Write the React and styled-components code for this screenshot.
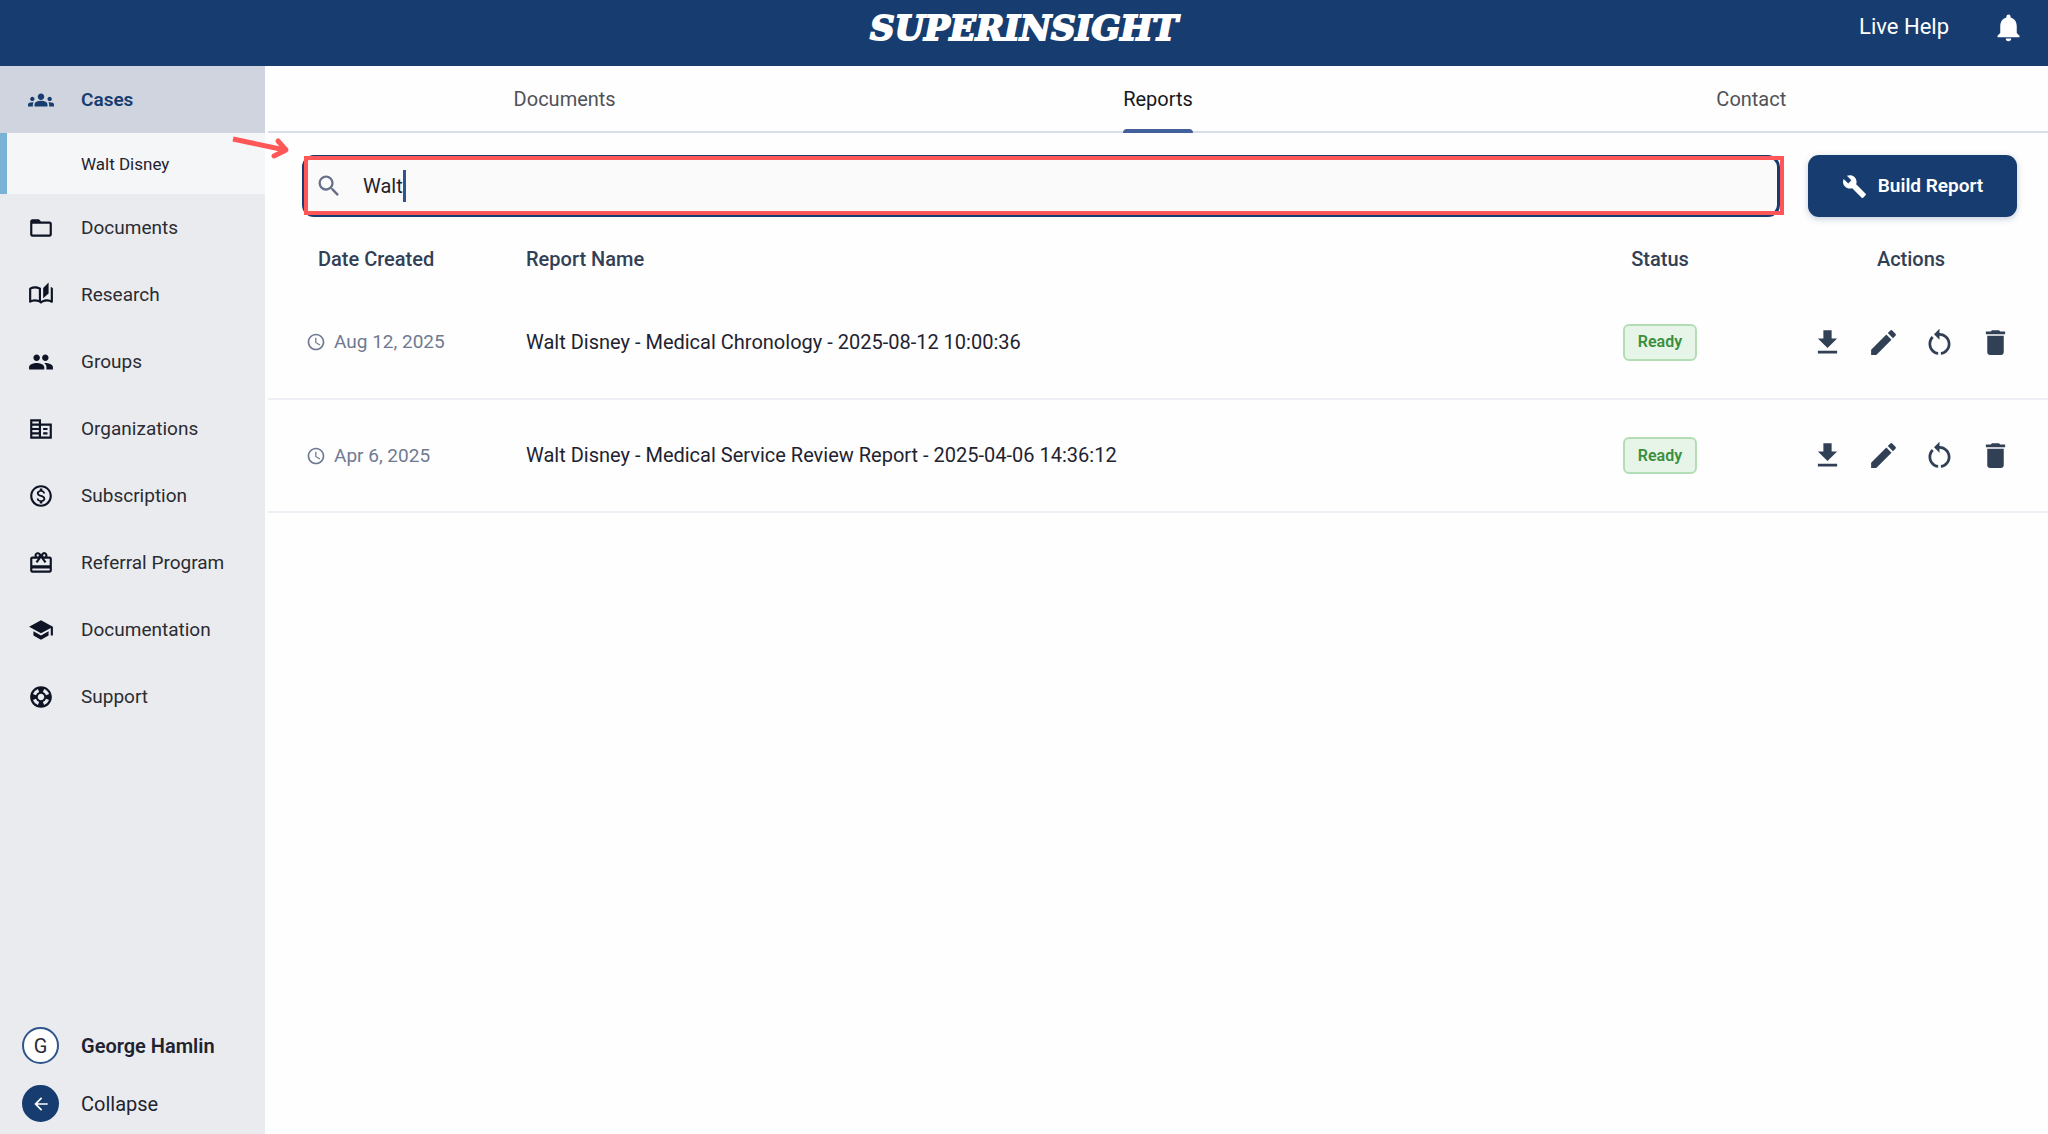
import React, { useState } from "react";
import styled, { createGlobalStyle } from "styled-components";
import {
  MdGroups,
  MdFolderOpen,
  MdOutlineAutoStories,
  MdPeople,
  MdCorporateFare,
  MdOutlineMonetizationOn,
  MdCardGiftcard,
  MdSchool,
  MdSupport,
  MdNotifications,
  MdBuild,
  MdSearch,
  MdAccessTime,
  MdEdit,
  MdRestartAlt,
  MdDelete,
  MdArrowBack,
} from "react-icons/md";

const GlobalStyle = createGlobalStyle`
  *, *::before, *::after { box-sizing: border-box; }
  body {
    margin: 0;
    background: #fefefe;
    color: #1f2330;
    font-family: Roboto, "Liberation Sans", sans-serif;
    font-size: 19px;
    line-height: 24px;
  }
  button, input { font: inherit; color: inherit; }
  a { color: inherit; text-decoration: none; }
`;

const Page = styled.div`
  display: flex;
  flex-direction: column;
  min-height: 100vh;
`;

const Header = styled.header`
  display: grid;
  grid-template-columns: 1fr auto 1fr;
  align-items: start;
  height: 66px;
  padding: 8px 23px 0;
  background: #173d70;
  color: #fff;
`;

const Logo = styled.a`
  grid-column: 2;
  font-family: "DejaVu Serif", serif;
  font-size: 34px;
  line-height: 40px;
  font-weight: 700;
  font-style: italic;
  -webkit-text-stroke: 2px #fff;
`;

const HeaderActions = styled.div`
  display: flex;
  justify-content: flex-end;
  align-items: center;
  gap: 43px;
  height: 38px;
`;

const HelpLink = styled.a`
  font-size: 22px;
`;

const IconButton = styled.button`
  display: flex;
  align-items: center;
  justify-content: center;
  width: ${(p) => p.$width}px;
  height: ${(p) => p.$height}px;
  padding: 0;
  border: 0;
  background: none;
  cursor: pointer;
`;

const Body = styled.div`
  display: flex;
  flex: 1;
`;

const Sidebar = styled.aside`
  display: flex;
  flex-direction: column;
  justify-content: space-between;
  flex: 0 0 265px;
  background: #eaebef;
`;

const NavItem = styled.a`
  display: flex;
  align-items: center;
  gap: 27px;
  height: 67px;
  padding-left: 28px;
  background: ${(p) => (p.$active ? "#d0d4de" : "transparent")};
  color: ${(p) => (p.$active ? "#173d70" : "#2a2c31")};
  font-weight: ${(p) => (p.$active ? 600 : 400)};

  svg {
    flex: none;
    color: ${(p) => (p.$active ? "#173d70" : "#0e1424")};
  }
`;

const SubItem = styled.a`
  display: flex;
  align-items: center;
  height: 61px;
  padding-left: 74px;
  border-left: 7px solid #7ab2d6;
  background: #f5f6f8;
  font-size: 17px;
`;

const Account = styled.div`
  display: flex;
  flex-direction: column;
  gap: 21px;
  padding: 0 22px 12px;
`;

const AccountButton = styled.button`
  display: flex;
  align-items: center;
  gap: 22px;
  padding: 0;
  border: 0;
  background: none;
  font-size: 20px;
  font-weight: ${(p) => (p.$strong ? 600 : 400)};
  cursor: pointer;
`;

const Disc = styled.span`
  display: flex;
  align-items: center;
  justify-content: center;
  width: 37px;
  height: 37px;
  border: 2px solid ${(p) => (p.$filled ? "#173d70" : "#2f558c")};
  border-radius: 50%;
  background: ${(p) => (p.$filled ? "#173d70" : "#fff")};
  color: ${(p) => (p.$filled ? "#fff" : "#2a2c31")};
  font-weight: 400;
`;

const Main = styled.main`
  flex: 1;
  min-width: 0;
  padding-left: 3px;
`;

const Tabs = styled.nav`
  display: grid;
  grid-template-columns: repeat(3, 1fr);
  justify-items: center;
  height: 67px;
  border-bottom: 2px solid #d9dee8;
`;

const Tab = styled.a`
  position: relative;
  display: flex;
  align-items: center;
  height: 65px;
  font-size: 20px;
  color: ${(p) => (p.$active ? "#16181d" : "#505258")};

  &::after {
    content: "";
    position: absolute;
    inset: auto 0 -2px;
    height: 4px;
    border-radius: 4px 4px 0 0;
    background: ${(p) => (p.$active ? "#42609a" : "transparent")};
  }
`;

const Toolbar = styled.div`
  display: flex;
  gap: 28px;
  padding: 22px 31px 0 34px;
`;

const SearchBox = styled.label`
  position: relative;
  display: flex;
  align-items: center;
  flex: 1;
  height: 62px;
  padding-left: 10px;
  border: 3px solid #173d70;
  border-radius: 12px;
  background: #fafafa;
  cursor: text;

  svg { color: #667089; margin-right: 20px; }
`;

const SearchInput = styled.input`
  field-sizing: content;
  min-width: 1px;
  padding: 0;
  border: 0;
  outline: 0;
  background: transparent;
  font-size: 20px;
  caret-color: transparent;
`;

const Caret = styled.span`
  width: 3px;
  height: 32px;
  background: #2f558c;
`;

const Highlight = styled.span`
  position: absolute;
  inset: -2px -7px -1px -1px;
  border: 4px solid #ff5757;
  pointer-events: none;
`;

const Pointer = styled.svg`
  && {
    position: absolute;
    left: -73px;
    top: -26px;
    margin: 0;
    color: #ff5757;
    pointer-events: none;
  }
`;

const BuildButton = styled.button`
  display: flex;
  align-items: center;
  justify-content: center;
  gap: 11px;
  width: 209px;
  height: 62px;
  padding: 0;
  border: 0;
  border-radius: 11px;
  background: #173d70;
  box-shadow: 0 2px 6px rgba(23, 61, 112, 0.25);
  color: #fff;
  font-weight: 600;
  cursor: pointer;
`;

const Table = styled.table`
  width: 100%;
  table-layout: fixed;
  border-collapse: collapse;
`;

const HeadCell = styled.th`
  width: ${(p) => p.$width || "auto"};
  height: 69px;
  padding: 14px 0 0 ${(p) => p.$indent || 0}px;
  color: #324056;
  font-size: 20px;
  font-weight: 500;
  text-align: ${(p) => (p.$center ? "center" : "left")};
`;

const Row = styled.tr`
  height: 113px;
  border-bottom: 2px solid #eeeff5;
`;

const Cell = styled.td`
  padding: 0;
  text-align: ${(p) => (p.$center ? "center" : "left")};
`;

const DateLabel = styled.span`
  display: flex;
  align-items: center;
  gap: 8px;
  padding-left: 38px;
  color: #6f7a92;
`;

const ReportName = styled.span`
  font-size: 20px;
`;

const Badge = styled.span`
  display: inline-flex;
  align-items: center;
  height: 37px;
  padding: 0 13px;
  border: 2px solid #b3deb5;
  border-radius: 6px;
  background: #e7f4e8;
  color: #3a8f3e;
  font-size: 16px;
  font-weight: 600;
`;

const Actions = styled.div`
  display: flex;
  justify-content: center;
  color: #324056;
`;

const navItems = [
  ["Documents", MdFolderOpen],
  ["Research", MdOutlineAutoStories],
  ["Groups", MdPeople],
  ["Organizations", MdCorporateFare],
  ["Subscription", MdOutlineMonetizationOn],
  ["Referral Program", MdCardGiftcard],
  ["Documentation", MdSchool],
  ["Support", MdSupport],
];

const reports = [
  { date: "Aug 12, 2025", name: "Walt Disney - Medical Chronology - 2025-08-12 10:00:36" },
  { date: "Apr 6, 2025", name: "Walt Disney - Medical Service Review Report - 2025-04-06 14:36:12" },
];

const DownloadIcon = () => (
  <svg width="33" height="33" viewBox="0 0 24 24" fill="currentColor" aria-hidden="true">
    <path d="M19 9h-4V3H9v6H5l7 7 7-7zM5 18v2h14v-2H5z" />
  </svg>
);

const rowActions = [
  ["Download", <DownloadIcon key="d" />],
  ["Edit", <MdEdit key="e" size={33} />],
  ["Regenerate", <MdRestartAlt key="r" size={33} />],
  ["Delete", <MdDelete key="x" size={33} />],
];

export default function App() {
  const [query, setQuery] = useState("Walt");
  return (
    <Page>
      <GlobalStyle />
      <Header>
        <Logo href="#">SUPERINSIGHT</Logo>
        <HeaderActions>
          <HelpLink href="#help">Live Help</HelpLink>
          <IconButton $width={33} $height={38} aria-label="Notifications">
            <MdNotifications size={33} />
          </IconButton>
        </HeaderActions>
      </Header>
      <Body>
        <Sidebar>
          <nav>
            <NavItem href="#cases" $active>
              <MdGroups size={26} />
              Cases
            </NavItem>
            <SubItem href="#walt-disney">Walt Disney</SubItem>
            {navItems.map(([label, Icon]) => (
              <NavItem key={label} href={`#${label}`}>
                <Icon size={26} />
                {label}
              </NavItem>
            ))}
          </nav>
          <Account>
            <AccountButton $strong>
              <Disc>G</Disc>
              George Hamlin
            </AccountButton>
            <AccountButton>
              <Disc $filled>
                <MdArrowBack size={20} />
              </Disc>
              Collapse
            </AccountButton>
          </Account>
        </Sidebar>
        <Main>
          <Tabs>
            <Tab href="#documents">Documents</Tab>
            <Tab href="#reports" $active>Reports</Tab>
            <Tab href="#contact">Contact</Tab>
          </Tabs>
          <Toolbar>
            <SearchBox>
              <MdSearch size={28} />
              <SearchInput
                aria-label="Search reports"
                value={query}
                onChange={(e) => setQuery(e.target.value)}
              />
              <Caret />
              <Highlight />
              <Pointer width="60" height="32" viewBox="0 0 60 32" fill="none" stroke="currentColor" strokeWidth="5">
                <path d="M1 7L53 18" />
                <path d="M46 9L54 18L42 24" strokeLinecap="round" strokeLinejoin="round" />
              </Pointer>
            </SearchBox>
            <BuildButton>
              <MdBuild size={25} />
              Build Report
            </BuildButton>
          </Toolbar>
          <Table>
            <thead>
              <tr>
                <HeadCell $width="258px" $indent={50}>Date Created</HeadCell>
                <HeadCell>Report Name</HeadCell>
                <HeadCell $width="228px" $center>Status</HeadCell>
                <HeadCell $width="274px" $center>Actions</HeadCell>
              </tr>
            </thead>
            <tbody>
              {reports.map((report) => (
                <Row key={report.name}>
                  <Cell>
                    <DateLabel>
                      <MdAccessTime size={20} />
                      {report.date}
                    </DateLabel>
                  </Cell>
                  <Cell>
                    <ReportName>{report.name}</ReportName>
                  </Cell>
                  <Cell $center>
                    <Badge>Ready</Badge>
                  </Cell>
                  <Cell>
                    <Actions>
                      {rowActions.map(([label, icon]) => (
                        <IconButton key={label} $width={56} $height={44} aria-label={label}>
                          {icon}
                        </IconButton>
                      ))}
                    </Actions>
                  </Cell>
                </Row>
              ))}
            </tbody>
          </Table>
        </Main>
      </Body>
    </Page>
  );
}
